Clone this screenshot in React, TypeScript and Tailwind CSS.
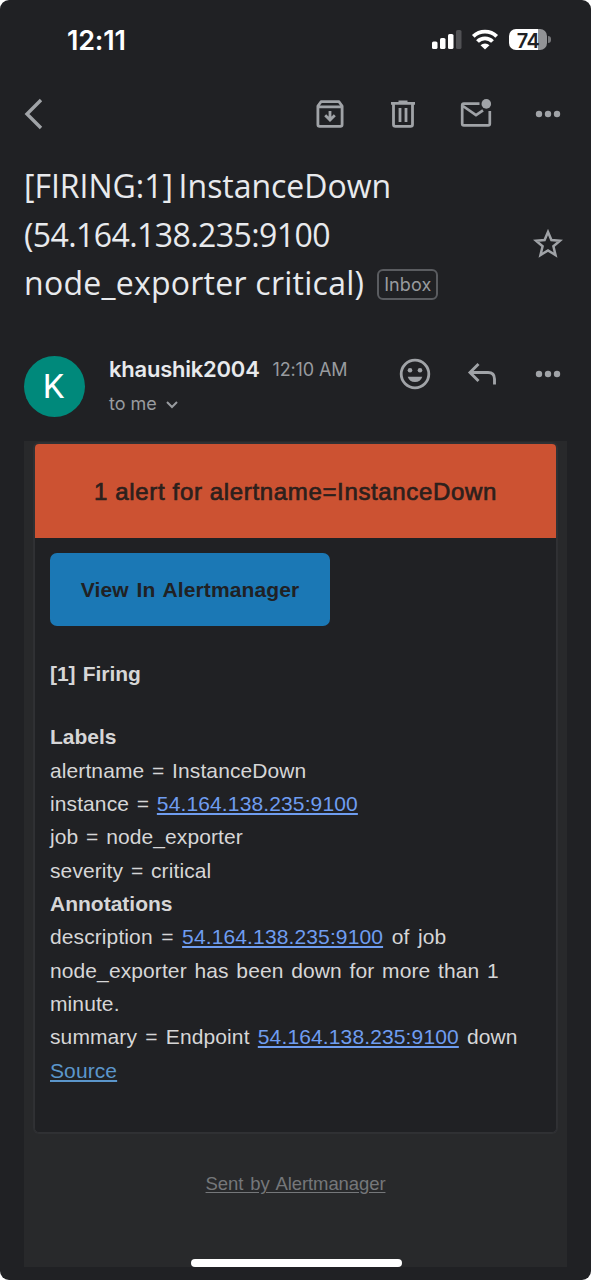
import type { ReactNode } from "react";

const Dots = () => (
  <svg width="26" height="8" viewBox="0 0 26 8" fill="#a0a3a7">
    <circle cx="4" cy="4" r="3.2" />
    <circle cx="13" cy="4" r="3.2" />
    <circle cx="22" cy="4" r="3.2" />
  </svg>
);

const Row = ({ children, className = "" }: { children: ReactNode; className?: string }) => (
  <div className={`h-[33.33px] whitespace-nowrap ${className}`}>{children}</div>
);

const Host = () => (
  <a className="tracking-[0.13px] text-[#6f9df0] underline decoration-[1.5px] underline-offset-[2px]">54.164.138.235:9100</a>
);

export default function App() {
  return (
    <div className="h-[1280px] w-[591px] overflow-hidden bg-white">
      <div className="flex h-full flex-col overflow-hidden rounded-[9px] bg-[#202124] px-6 font-['Inter',sans-serif]">
        <header className="flex h-[79px] shrink-0 items-center justify-between pl-[43px] pr-[16px]">
          <span className="pt-[3px] text-[27px] font-semibold tracking-[-0.2px] text-white">12:11</span>
          <div className="flex items-center">
            <svg width="32" height="22" viewBox="0 0 32 22" fill="#fff">
              <rect x="0" y="12.500" width="5.5" height="7.500" rx="1.600" />
              <rect x="8" y="9" width="5.500" height="11" rx="1.600" />
              <rect x="16" y="5" width="5.500" height="15" rx="1.600" />
              <rect x="24" y="1" width="5.500" height="19" rx="1.600" fill="#505154" />
            </svg>
            <svg className="ml-[7px]" width="28" height="22" viewBox="0 0 28 22" fill="none" stroke="#fff" strokeWidth="3.900">
              <path d="M2.300 7.300 A17 17 0 0 1 25.700 7.300" />
              <path d="M6.500 12.500 A10.500 10.500 0 0 1 21.500 12.500" />
              <path d="M14 20.500 L9.500 16.200 A6.500 6.500 0 0 1 18.500 16.200 Z" fill="#fff" stroke="none" />
            </svg>
            <div className="ml-[10px] flex h-[21px] w-[38px] items-center justify-center rounded-[7px] bg-[linear-gradient(90deg,#fff_76%,#929396_76%)] pt-[2px] text-[20px] font-semibold leading-none tracking-[-0.5px] text-[#202124]">74</div>
            <div className="ml-[1px] h-[7px] w-[3px] rounded-r-full bg-[#77787b]" />
          </div>
        </header>

        <nav className="flex h-[69px] shrink-0 items-center justify-between pr-[6px]">
          <svg width="20" height="32" viewBox="0 0 20 32" fill="none" stroke="#a0a3a7" strokeWidth="3.400">
            <path d="M17 2 L3 16 L17 30" />
          </svg>
          <div className="flex items-center">
            <svg width="28" height="28" viewBox="0 0 28 28" fill="none" stroke="#a0a3a7" strokeWidth="2.800">
              <path d="M1.900 6 L5 1.700 H23 L26.100 6 V24.500 Q26.100 26.300 24.300 26.300 H3.700 Q1.900 26.300 1.900 24.500 Z M1.900 6.800 H26.100" strokeLinejoin="round" />
              <path d="M14 11 V20 M9.200 15.200 L14 20 L18.800 15.200" />
            </svg>
            <svg className="ml-[46px]" width="26" height="28" viewBox="0 0 26 28" fill="none" stroke="#a0a3a7" strokeWidth="2.800">
              <path d="M1 3.400 H25 M8.500 2 H17.500 M3.500 3 V24.500 Q3.500 26.300 5.500 26.300 H20.500 Q22.500 26.300 22.500 24.500 V3 M10 8 V22 M16 8 V22" />
            </svg>
            <svg className="ml-[44px]" width="32" height="30" viewBox="0 0 32 30" fill="none" stroke="#a0a3a7" strokeWidth="2.700">
              <path d="M19.500 4.600 H3.800 Q2.200 4.600 2.200 6.200 V24.800 Q2.200 26.400 3.800 26.400 H28.200 Q29.800 26.400 29.800 24.800 V12 M2.200 6.500 L16 16 L23 11.300" />
              <circle cx="26.300" cy="4.900" r="4.800" fill="#a0a3a7" stroke="none" />
            </svg>
            <div className="ml-[43px] flex"><Dots /></div>
          </div>
        </nav>

        <section className="flex h-[195px] shrink-0 pt-[14px]">
          <h1 className="w-[500px] whitespace-nowrap text-[32px] leading-[48.700px] text-[#e8eaed] font-['Open_Sans',sans-serif]">
            <span className="block w-fit tracking-[-0.030px] [word-spacing:-2.500px]">[FIRING:1] InstanceDown</span>
            <span className="block w-fit tracking-[-0.580px]">(54.164.138.235:9100</span>
            <span className="flex items-center">
              <span className="tracking-[0.250px]">node_exporter critical)</span>
              <span className="ml-[13px] mt-[2px] flex h-[31px] items-center rounded-[6px] border-2 border-[#5a5c60] px-[5px] font-['Inter'] text-[18px] leading-none tracking-[0.100px] text-[#989b9f]">Inbox</span>
            </span>
          </h1>
          <svg className="ml-[9px] mt-[66px]" width="30" height="32" viewBox="0 0 30 32" fill="none" stroke="#a0a3a7" strokeWidth="2.500">
            <path d="M15 4 L18.400 12.100 L27 12.700 L20.400 18.300 L22.500 27 L15 22.400 L7.500 27 L9.600 18.300 L3 12.700 L11.600 12.100 Z" />
          </svg>
        </section>

        <section className="flex h-[98px] shrink-0 pr-[6px]">
          <div className="mt-[12.500px] flex size-[61px] items-center justify-center rounded-full bg-[#00897b] pr-[2px] font-['Roboto'] text-[34px] text-white">K</div>
          <div className="ml-[24px] w-[260px] whitespace-nowrap pt-[9px]">
            <div className="flex h-[34px] items-center">
              <span className="text-[22px] font-semibold tracking-[-0.230px] text-[#e8eaed]">khaushik2004</span>
              <span className="ml-[13px] text-[18px] tracking-[-0.150px] text-[#989b9f]">12:10 AM</span>
            </div>
            <div className="flex h-[35px] items-center text-[18px] text-[#989b9f]">
              <span>to me</span>
              <svg className="ml-[9px] mt-[2px]" width="12" height="8" viewBox="0 0 12 8" fill="none" stroke="#989b9f" strokeWidth="2"><path d="M1 1 L6 6 L11 1" /></svg>
            </div>
          </div>
          <div className="ml-auto flex h-[62px] items-center">
            <svg width="32" height="32" viewBox="0 0 32 32" fill="none" stroke="#a0a3a7" strokeWidth="2.800">
              <circle cx="16" cy="16" r="13.800" />
              <circle cx="11" cy="12.200" r="2.300" fill="#a0a3a7" stroke="none" />
              <circle cx="21" cy="12.200" r="2.300" fill="#a0a3a7" stroke="none" />
              <path d="M8.700 18.800 H23.300 A7.700 7.700 0 0 1 8.700 18.800 Z" fill="#a0a3a7" stroke="none" />
            </svg>
            <svg className="ml-[36px]" width="30" height="24" viewBox="0 0 30 24" fill="none" stroke="#a0a3a7" strokeWidth="2.900">
              <path d="M11.500 2 L3 10.500 L11.500 19 M3 10.500 H21 Q27.500 10.500 27.500 17 V22.500" />
            </svg>
            <div className="ml-[38px] flex"><Dots /></div>
          </div>
        </section>

        <main className="flex h-[826px] w-[543px] shrink-0 flex-col bg-[#28292b] px-[10px] pt-[2px] font-['Liberation_Sans',sans-serif]">
          <article className="h-[690px] w-[523px] overflow-hidden rounded-[5px] border border-[#303134] bg-[#202124] text-[21px] leading-[33.330px] tracking-[0.100px] text-[#d6d6d7] ring-1 ring-[#2f3033]">
            <h2 className="flex h-[94px] items-center justify-center bg-[#cc5232] pt-[2px] text-[24px] font-medium text-[#2c201c]">
              <span className="whitespace-nowrap tracking-[0.650px] [-webkit-text-stroke:0.700px_#2c201c]">1 alert for alertname=InstanceDown</span>
            </h2>
            <div className="px-[15px] pt-[15px]">
              <a className="flex h-[73px] w-[280px] items-center justify-center rounded-[7px] bg-[#1b78b5] font-bold text-[#202124]"><span className="[word-spacing:2px]">View In Alertmanager</span></a>
              <div className="mt-[31px] font-bold tracking-[-0.050px]"><Row className="[word-spacing:1.500px]"><span>[1] Firing</span></Row></div>
              <div className="mt-[30px] [word-spacing:1.800px]">
                <Row><b className="tracking-normal">Labels</b></Row>
                <Row><span>alertname = InstanceDown</span></Row>
                <Row>instance = <Host /></Row>
                <Row>job = node_exporter</Row>
                <Row>severity = critical</Row>
                <Row><b className="tracking-normal">Annotations</b></Row>
                <Row className="[word-spacing:2.600px]">description = <Host /> of job</Row>
                <Row>node_exporter has been down for more than 1</Row>
                <Row>minute.</Row>
                <Row className="[word-spacing:2.300px]">summary = Endpoint <Host /> down</Row>
                <Row><a className="text-[#5b96cb] underline decoration-[1.5px] underline-offset-[2px]">Source</a></Row>
              </div>
            </div>
          </article>
          <footer className="mt-[39px] text-center text-[18.500px] leading-6 tracking-[-0.100px] text-[#75777a] underline underline-offset-[2px] [word-spacing:2px]">Sent by Alertmanager</footer>
          <div className="mx-auto mt-auto h-[8px] w-[211px] translate-x-px rounded-full bg-white" />
        </main>
      </div>
    </div>
  );
}
